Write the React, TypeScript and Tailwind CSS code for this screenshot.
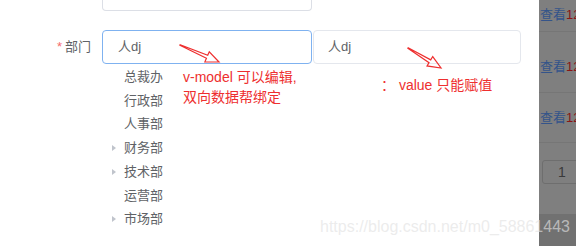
import React from "react";

const font = { fontFamily: '"Liberation Sans", "Noto Sans CJK SC", sans-serif' };

function Tri() {
  return (
    <svg width="6" height="8" viewBox="0 0 6 8" className="shrink-0">
      <path d="M1 1 L5 4 L1 7 Z" fill="#c0c4cc" />
    </svg>
  );
}

const tree: { name: string; arrow: boolean }[] = [
  { name: "总裁办", arrow: false },
  { name: "行政部", arrow: false },
  { name: "人事部", arrow: false },
  { name: "财务部", arrow: true },
  { name: "技术部", arrow: true },
  { name: "运营部", arrow: false },
  { name: "市场部", arrow: true },
];

function Arrow({ x1, y1, x2, y2 }: { x1: number; y1: number; x2: number; y2: number }) {
  const dx = x2 - x1;
  const dy = y2 - y1;
  const len = Math.sqrt(dx * dx + dy * dy);
  const ux = dx / len;
  const uy = dy / len;
  const px = -uy;
  const py = ux;
  const hl = 13;
  const hw = 5.5;
  const sw = 1.6;
  const bx = x2 - ux * hl;
  const by = y2 - uy * hl;
  const pts = [
    [x1 + px * 0.3, y1 + py * 0.3],
    [bx + px * sw, by + py * sw],
    [bx + px * hw, by + py * hw],
    [x2, y2],
    [bx - px * hw, by - py * hw],
    [bx - px * sw, by - py * sw],
    [x1 - px * 0.3, y1 - py * 0.3],
  ]
    .map((p) => p.join(","))
    .join(" ");
  return <polygon points={pts} fill="none" stroke="#ee2f2f" strokeWidth="1.2" strokeLinejoin="miter" />;
}

export default function App() {
  return (
    <div className="relative flex w-[576px] h-[246px] overflow-hidden bg-white" style={font}>
      {/* main page */}
      <div className="flex flex-col w-[539px]">
        <div className="ml-[102px] w-[210px] h-[11px] border border-t-0 border-[#dcdfe6] rounded-b-[4px]" />
        <div className="flex items-center mt-[19px] h-[34px]">
          <div className="w-[102px] pr-[11px] text-right text-[13px] text-[#606266]">
            <span className="text-[#f56c6c] mr-[3px]">*</span>部门
          </div>
          <div className="w-[210px] h-[34px] border border-[#7fb2f0] rounded-[4px] flex items-center pl-[15px] text-[13px] text-[#606266]">
            人dj
          </div>
          <div className="ml-[1px] w-[208px] h-[34px] border border-[#e4e7ed] rounded-[4px] flex items-center pl-[14px] text-[13px] text-[#606266]">
            人dj
          </div>
        </div>
        <div className="flex flex-col mt-[1px] pl-[111px]">
          {tree.map((t) => (
            <div key={t.name} className="flex items-center h-[23.7px] text-[13px] text-[#606266]">
              <div className="w-[13px] flex items-center">{t.arrow ? <Tri /> : null}</div>
              <span>{t.name}</span>
            </div>
          ))}
        </div>
      </div>

      {/* masked side strip */}
      <div className="flex flex-col w-[37px] bg-[#7f7f7f] text-[13px]">
        <div className="h-[32px] flex items-center pb-[2px] pl-[1px] whitespace-nowrap border-b border-[#767676]">
          <span className="text-[#34548a]">查看</span>
          <span className="text-[#8a1515]">12</span>
        </div>
        <div className="h-[61px] flex items-center pt-[10px] pl-[1px] whitespace-nowrap border-b border-[#767676]">
          <span className="text-[#34548a]">查看</span>
          <span className="text-[#8a1515]">12</span>
        </div>
        <div className="h-[50px] flex items-center pl-[1px] whitespace-nowrap border-b border-[#767676]">
          <span className="text-[#34548a]">查看</span>
          <span className="text-[#8a1515]">12</span>
        </div>
        <div className="mt-[17px] ml-[3px] h-[24px] w-[40px] border border-[#6e6e6e] rounded-[3px] flex items-center pl-[15px] text-[14px] text-[#3a3a3a]">
          1
        </div>
        <div className="mt-auto h-[32px] bg-[#717171]" />
      </div>

      {/* annotations drawn over the screenshot */}
      <div className="absolute left-[183px] top-[67px] text-[14px] leading-[20px] text-[#ee2f2f]" style={font}>
        <div>v-model 可以编辑,</div>
        <div>双向数据帮绑定</div>
      </div>
      <div className="absolute left-[381px] top-[75px] text-[14px] leading-[20px] text-[#ee2f2f]" style={font}>
        ： value 只能赋值
      </div>
      <svg className="absolute left-0 top-0 pointer-events-none" width="576" height="246">
        <Arrow x1={180} y1={45} x2={219} y2={62} />
        <Arrow x1={408} y1={48} x2={441} y2={68} />
      </svg>

      {/* watermark */}
      <div className="absolute left-[320px] top-[217px] text-[16px] leading-[20px] text-[#e2e2e2]/65 whitespace-nowrap">
        https://blog.csdn.net/m0_58861443
      </div>
    </div>
  );
}
